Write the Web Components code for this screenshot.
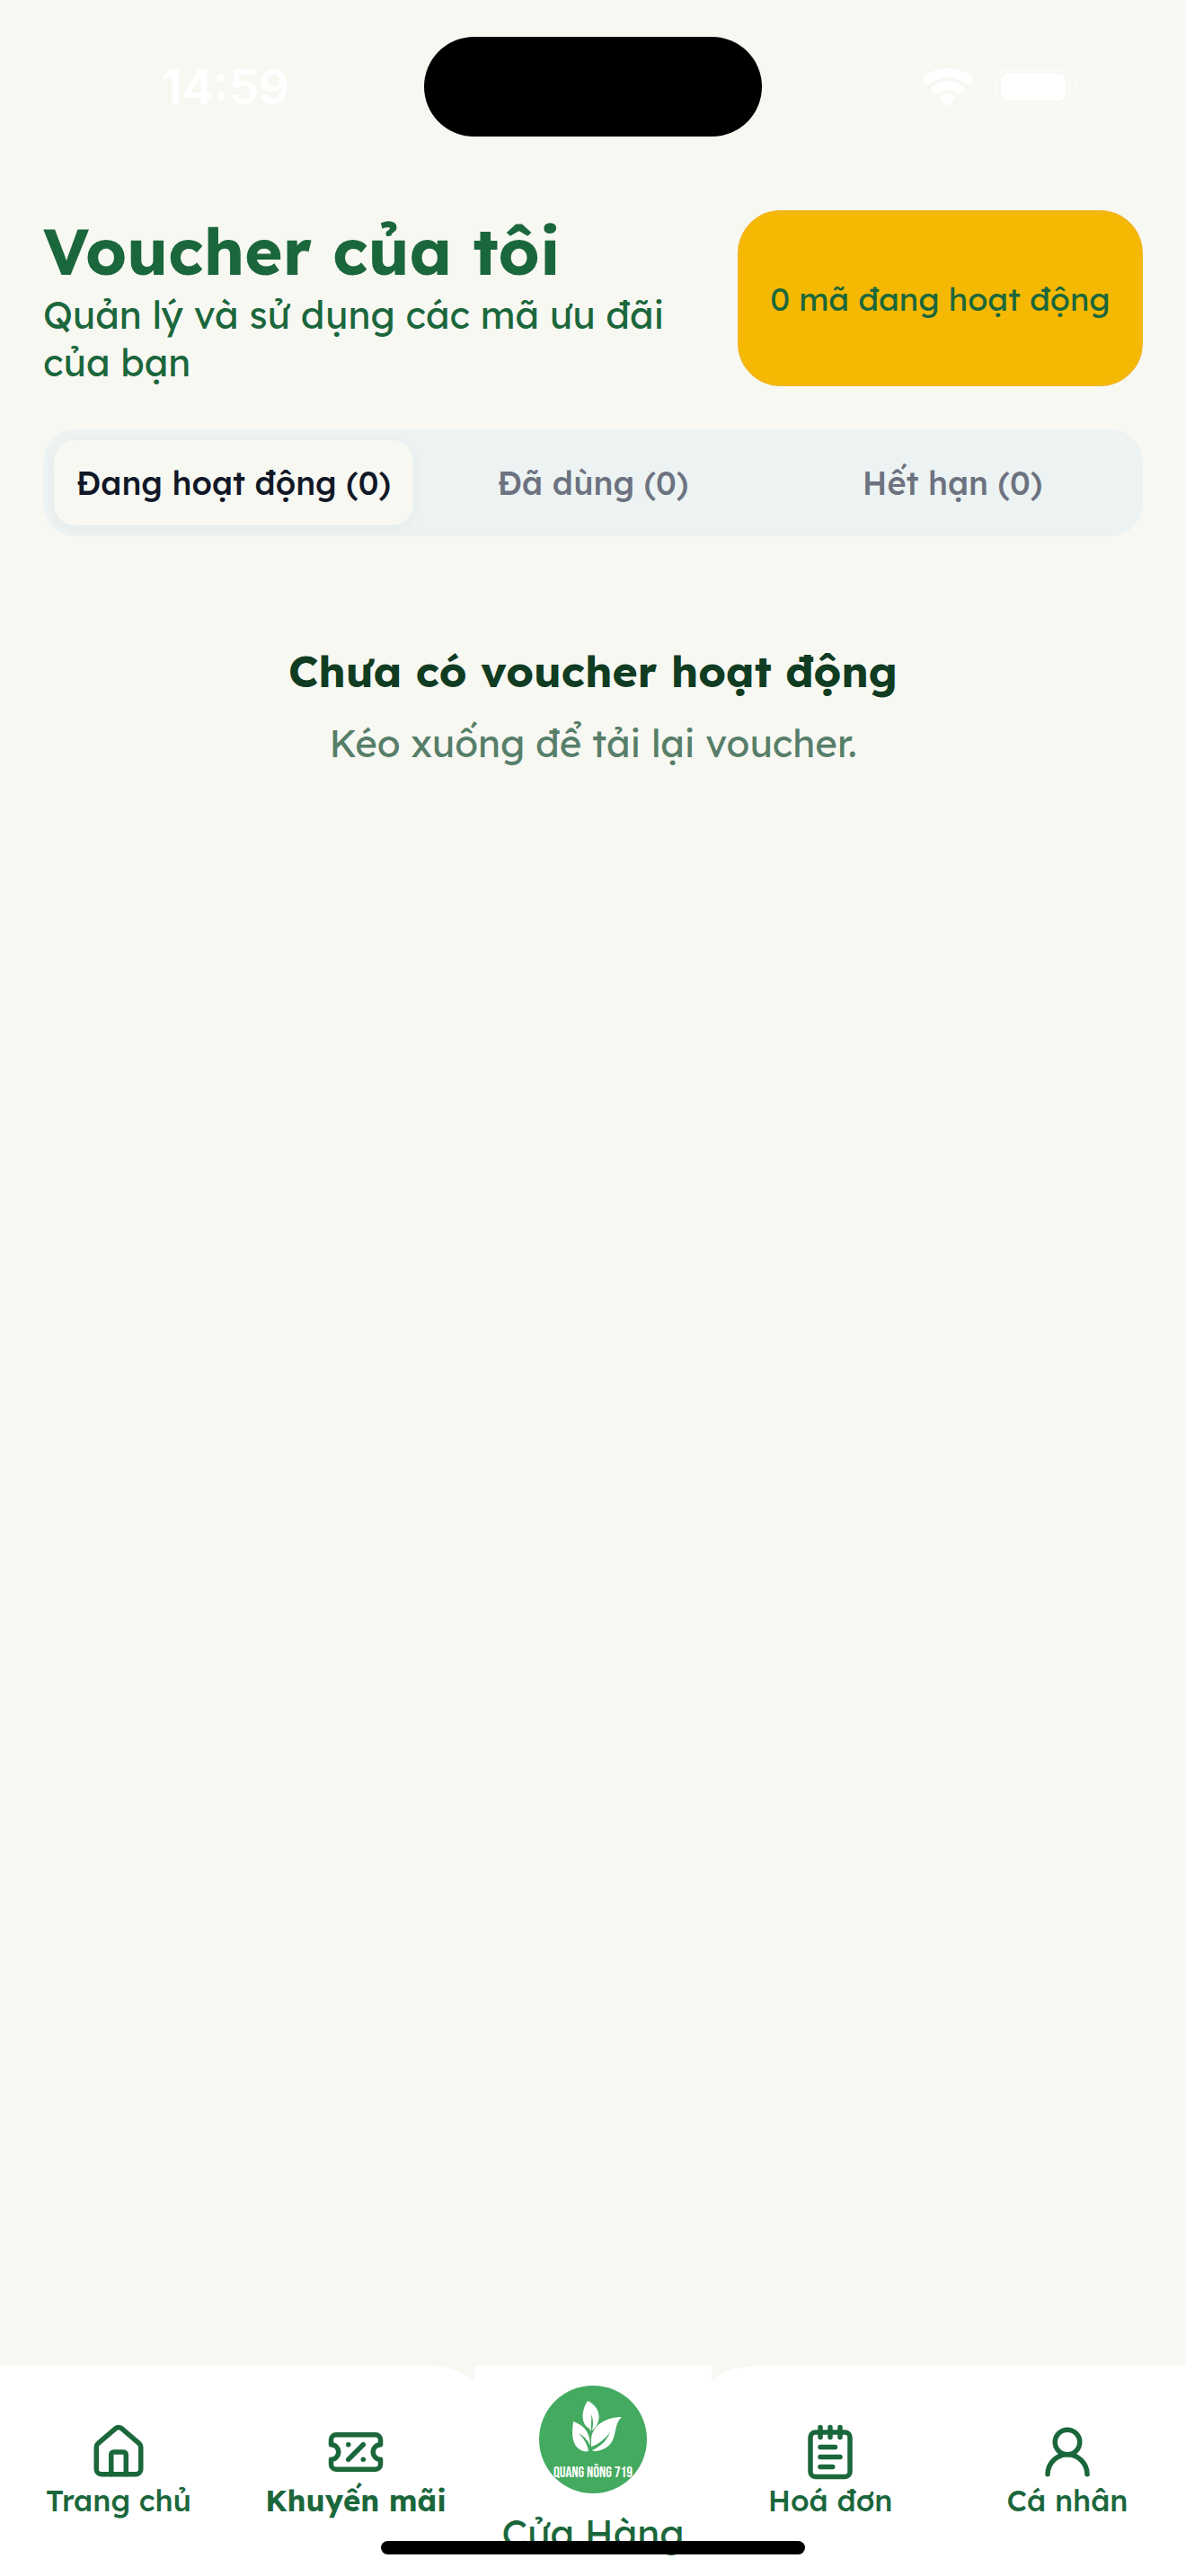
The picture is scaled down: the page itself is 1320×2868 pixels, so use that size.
<!DOCTYPE html>
<html lang="vi">
<head>
<meta charset="utf-8">
<meta name="viewport" content="width=device-width, initial-scale=1">
<title>Voucher của tôi</title>
<style>
  body {
    margin: 0;
    background-color: #f8f8f3;
    font-family: Lexend, Inter, "Noto Sans", sans-serif;
    color: #1b673c;
    --green: #1b673c;
    --page: #f8f8f3;
  }
</style>
</head>
<body>
<voucher-app></voucher-app>

<script>
function define(name, html) {
  const template = document.createElement('template');
  template.innerHTML = html;
  customElements.define(name, class extends HTMLElement {
    constructor() {
      super();
      this.attachShadow({mode: 'open'});
      this.shadowRoot.appendChild(template.content.cloneNode(true));
    }
  });
}

define('status-bar', `
  <style>
    :host {
      display: grid;
      grid-template-columns: 1fr 376px 1fr;
      align-items: center;
      padding: 41px 0;
      color: #fff;
    }
    time {
      padding-left: 30px;
      text-align: center;
      font-family: Inter, sans-serif;
      font-size: 53px;
      font-weight: 600;
      line-height: 60px;
    }
    .island {
      height: 111px;
      border-radius: 56px;
      background-color: #000;
    }
    .right {
      display: flex;
      justify-content: flex-end;
      align-items: center;
      gap: 24px;
      padding-right: 120px;
    }
    svg { display: block; }
  </style>
  <time>14:59</time>
  <div class="island"></div>
  <div class="right">
    <svg width="58" height="42" viewBox="0 0 58 42" fill="#fff">
      <path d="M29 0c11 0 21 4 28 11 1 1 1 2 0 3l-4 4c-1 1-2 1-3 0-6-5-13-8-21-8S14 13 8 18c-1 1-2 1-3 0l-4-4c-1-1-1-2 0-3C8 4 18 0 29 0z"/>
      <path d="M29 14c7 0 13 3 18 7 1 1 1 2 0 3l-4 4c-1 1-2 1-3 0-3-3-7-4-11-4s-8 1-11 4c-1 1-2 1-3 0l-4-4c-1-1-1-2 0-3 5-4 11-7 18-7z"/>
      <path d="M29 28c3 0 6 1 8 3 1 1 1 2 0 3l-7 7c-1 1-1 1-2 0l-7-7c-1-1-1-2 0-3 2-2 5-3 8-3z"/>
    </svg>
    <svg width="92" height="40" viewBox="0 0 92 40" fill="#fff">
      <rect x="1" y="1" width="82" height="38" rx="12" fill="none" stroke="#fff" stroke-width="2" opacity=".4"/>
      <rect x="6" y="5" width="72" height="30" rx="8"/>
      <path d="M87 14c4 1 5 11 0 13z" opacity=".4"/>
    </svg>
  </div>
`);

define('page-header', `
  <style>
    :host {
      display: flex;
      justify-content: space-between;
      gap: 36px;
    }
    .text { flex: 1; }
    h1 {
      margin: 0;
      font-size: 72px;
      line-height: 90px;
      font-weight: 700;
    }
    p {
      margin: 0;
      font-size: 42px;
      line-height: 53px;
    }
    .badge {
      display: flex;
      align-items: center;
      justify-content: center;
      box-sizing: border-box;
      min-width: 451px;
      padding: 0 24px;
      border: 2px solid #f2b51c;
      border-radius: 48px;
      background-color: #f5b903;
      font-size: 36px;
      line-height: 45px;
      white-space: nowrap;
    }
  </style>
  <div class="text">
    <h1><slot name="title"></slot></h1>
    <p><slot></slot></p>
  </div>
  <div class="badge"><slot name="badge"></slot></div>
`);

define('tab-bar', `
  <style>
    :host {
      display: grid;
      grid-template-columns: repeat(3, 1fr);
      padding: 12px;
      border-radius: 36px;
      background-color: #ecf3f2;
    }
  </style>
  <slot></slot>
`);

define('tab-item', `
  <style>
    :host { display: block; }
    button {
      display: block;
      width: 100%;
      height: 95px;
      margin: 0;
      padding: 0;
      border: 0;
      border-radius: 24px;
      background: none;
      color: #6d7280;
      font-family: inherit;
      font-size: 36px;
      font-weight: 500;
      white-space: nowrap;
    }
    :host([active]) button {
      background-color: var(--page);
      color: #111827;
      box-shadow: 0 3px 15px rgba(0,0,0,0.04);
    }
  </style>
  <button type="button"><slot></slot></button>
`);

define('empty-state', `
  <style>
    :host {
      display: block;
      text-align: center;
    }
    h2 {
      margin: 0 0 24px;
      color: #103c22;
      font-size: 48px;
      line-height: 60px;
      font-weight: 700;
    }
    p {
      margin: 0;
      color: #577e69;
      font-size: 42px;
      line-height: 53px;
    }
  </style>
  <h2><slot name="title"></slot></h2>
  <p><slot></slot></p>
`);

define('nav-item', `
  <style>
    :host { display: block; }
    a {
      display: flex;
      flex-direction: column;
      align-items: center;
      padding-top: 63px;
      color: var(--green);
      text-decoration: none;
      font-size: 33px;
      line-height: 41px;
      font-weight: 500;
      white-space: nowrap;
    }
    :host([active]) a { font-weight: 700; }
    ::slotted(svg) {
      display: block;
      width: 66px;
      height: 66px;
      fill: none;
      stroke: var(--green);
      stroke-width: 2;
      stroke-linecap: round;
      stroke-linejoin: round;
    }
  </style>
  <a href="#"><slot name="icon"></slot><slot></slot></a>
`);

define('store-button', `
  <style>
    :host {
      display: block;
      position: relative;
      background-color: #fff;
    }
    a {
      display: flex;
      flex-direction: column;
      align-items: center;
      gap: 18px;
      padding-top: 22px;
      color: var(--green);
      text-decoration: none;
      font-size: 42px;
      line-height: 53px;
      white-space: nowrap;
    }
    svg { display: block; }
    .notch {
      position: absolute;
      top: 0;
      fill: var(--page);
    }
    .left { right: 100%; }
    .right { left: 100%; }
    .logo text {
      font-family: "Bebas Neue", "Roboto Condensed", Roboto, sans-serif;
      font-size: 17px;
      font-weight: 400;
    }
  </style>
  <svg class="notch left" width="46" height="18" viewBox="0 0 46 18"><path d="M0 0Q30 2 46 18V0z"/></svg>
  <svg class="notch right" width="46" height="18" viewBox="0 0 46 18"><path d="M46 0Q16 2 0 18V0z"/></svg>
  <a href="#">
    <svg class="logo" width="120" height="120" viewBox="0 0 120 120">
      <circle cx="60" cy="60" r="60" fill="#44aa60"/>
      <g fill="#fff">
        <path d="M54 17C48 26 46 39 53 46C56 47 57 50 58 51C57 45 59 38 58 32C61 39 60 45 59 50C69 43 71 25 54 17z"/>
        <path d="M38 40C37 50 35 64 45 71C48 73 52 74 55 73C54 65 49 58 44 53C51 57 55 62 57 67C57 56 53 45 38 40z"/>
        <path d="M92 35C76 35 59 43 58 60V68C65 66 74 59 79 52C75 62 68 68 59 72C61 74 67 73 73 70C88 63 82 43 92 35z"/>
      </g>
      <text x="60" y="102" text-anchor="middle" fill="#fff">QUANG NÔNG 719</text>
    </svg>
    <slot></slot>
  </a>
`);

define('bottom-nav', `
  <style>
    :host {
      display: grid;
      grid-template-columns: repeat(5, 1fr);
      position: relative;
      height: 234px;
      background-color: #fff;
    }
    .indicator {
      position: absolute;
      left: 50%;
      bottom: 24px;
      width: 472px;
      height: 15px;
      margin-left: -236px;
      border-radius: 8px;
      background-color: #000;
    }
  </style>
  <slot></slot>
  <div class="indicator"></div>
`);

define('voucher-app', `
  <style>
    :host {
      display: flex;
      flex-direction: column;
      min-height: 100vh;
    }
    main {
      display: flex;
      flex-direction: column;
      flex: 1;
      padding: 41px 48px;
    }
    tab-bar { margin-top: 48px; }
    empty-state { margin-top: 120px; }
  </style>
  <status-bar></status-bar>
  <main>
    <page-header>
      <span slot="title">Voucher của tôi</span>
      Quản lý và sử dụng các mã ưu đãi của bạn
      <span slot="badge">0 mã đang hoạt động</span>
    </page-header>
    <tab-bar>
      <tab-item active>Đang hoạt động (0)</tab-item>
      <tab-item>Đã dùng (0)</tab-item>
      <tab-item>Hết hạn (0)</tab-item>
    </tab-bar>
    <empty-state>
      <span slot="title">Chưa có voucher hoạt động</span>
      Kéo xuống để tải lại voucher.
    </empty-state>
  </main>
  <bottom-nav>
    <nav-item>
      <svg slot="icon" viewBox="0 0 24 24"><path d="M15 21v-8a1 1 0 0 0-1-1h-4a1 1 0 0 0-1 1v8"/><path d="M3 10a2 2 0 0 1 .709-1.528l7-5.999a2 2 0 0 1 2.582 0l7 5.999A2 2 0 0 1 21 10v9a2 2 0 0 1-2 2H5a2 2 0 0 1-2-2z"/></svg>
      Trang chủ
    </nav-item>
    <nav-item active>
      <svg slot="icon" viewBox="0 0 24 24"><path d="M2 9a3 3 0 1 1 0 6v2a2 2 0 0 0 2 2h16a2 2 0 0 0 2-2v-2a3 3 0 1 1 0-6V7a2 2 0 0 0-2-2H4a2 2 0 0 0-2 2z"/><path d="M9 9h.01"/><path d="m15 9-6 6"/><path d="M15 15h.01"/></svg>
      Khuyến mãi
    </nav-item>
    <store-button>Cửa Hàng</store-button>
    <nav-item>
      <svg slot="icon" viewBox="0 0 24 24"><path d="M8 2v4M12 2v4M16 2v4"/><rect x="4" y="4" width="16" height="18" rx="2"/><path d="M8 10h6M8 14h8M8 18h5"/></svg>
      Hoá đơn
    </nav-item>
    <nav-item>
      <svg slot="icon" viewBox="0 0 24 24"><circle cx="12" cy="8" r="5"/><path d="M20 21a8 8 0 0 0-16 0"/></svg>
      Cá nhân
    </nav-item>
  </bottom-nav>
`);
</script>
</body>
</html>
